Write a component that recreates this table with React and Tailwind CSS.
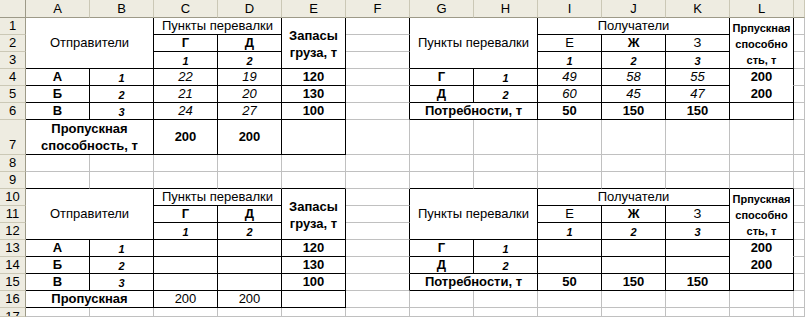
const R = { g: 'border-r-[#c0c0c0]', k: 'border-r-black', w: 'border-r-white' };
const B = { g: 'border-b-[#c0c0c0]', k: 'border-b-black', w: 'border-b-white' };

const reg = 'text-[13px]';
const bold = 'text-[13px] font-bold';
const it = 'text-[13px] italic';
const sm = 'text-[11px] font-bold italic pt-[2px]';

// one worksheet cell; s = span classes, r/b = right and bottom border colour
function X({ s = '', r = 'g', b = 'g', t = '', children }) {
  return (
    <div
      className={`${s} flex items-center justify-center overflow-hidden whitespace-nowrap border-r border-b bg-white ${R[r]} ${B[b]} ${t}`}
    >
      {children}
    </div>
  );
}

function Ch({ children }) {
  return (
    <div className="flex items-center justify-center border-r border-b border-r-[#cbc8b6] border-b-[#9d9a88] bg-[#eeece1] text-[13px]">
      {children}
    </div>
  );
}

function Rh({ children, pos = 'items-center' }) {
  return (
    <div
      className={`flex justify-center overflow-hidden border-r border-b border-r-[#9d9a88] border-b-[#cbc8b6] bg-[#eeece1] text-[13px] ${pos}`}
    >
      {children}
    </div>
  );
}

function TopRows({ n }) {
  return (
    <>
      <Rh>{n}</Rh>
      <X s="col-span-2 row-span-3" r="k" b="k" t={reg}>Отправители</X>
      <X s="col-span-2" r="k" b="k" t={reg}>Пункты перевалки</X>
      <X s="row-span-3" r="k" b="k" t={`${bold} leading-[17px] text-center pt-[1px]`}>
        Запасы
        <br />
        груза, т
      </X>
      <X r="k" />
      <X s="col-span-2 row-span-3" r="k" b="k" t={reg}>Пункты перевалки</X>
      <X s="col-span-3" r="k" b="k" t={reg}>Получатели</X>
      <X s="row-span-3" r="k" b="k" t="text-[11px] font-bold leading-[16px] text-center pt-[2px]">
        Прпускная
        <br />
        способно
        <br />
        сть, т
      </X>
      <X />

      <Rh>{n + 1}</Rh>
      <X r="k" b="k" t={bold}>Г</X>
      <X r="k" b="k" t={bold}>Д</X>
      <X r="k" />
      <X r="k" b="k" t={reg}>Е</X>
      <X r="k" b="k" t={bold}>Ж</X>
      <X r="k" b="k" t={reg}>З</X>
      <X />

      <Rh>{n + 2}</Rh>
      <X r="k" b="k" t={sm}>1</X>
      <X r="k" b="k" t={sm}>2</X>
      <X r="k" />
      <X r="k" b="k" t={sm}>1</X>
      <X r="k" b="k" t={sm}>2</X>
      <X r="k" b="k" t={sm}>3</X>
      <X />
    </>
  );
}

function DataRow({ n, name, idx, c, d, stock, dest, didx, vals, cap }) {
  return (
    <>
      <Rh>{n}</Rh>
      <X r="k" b="k" t={bold}>{name}</X>
      <X r="k" b="k" t={sm}>{idx}</X>
      <X r="k" b="k" t={it}>{c}</X>
      <X r="k" b="k" t={it}>{d}</X>
      <X r="k" b="k" t={bold}>{stock}</X>
      <X r="k" />
      <X r="k" b="k" t={bold}>{dest}</X>
      <X r="k" b="k" t={sm}>{didx}</X>
      <X r="k" b="k" t={it}>{vals[0]}</X>
      <X r="k" b="k" t={it}>{vals[1]}</X>
      <X r="k" b="k" t={it}>{vals[2]}</X>
      <X r="k" b={n === 4 || n === 13 ? 'w' : 'k'} t={bold}>{cap}</X>
      <X />
    </>
  );
}

function NeedRow({ n, name, idx, c, d, stock }) {
  return (
    <>
      <Rh>{n}</Rh>
      <X r="k" b="k" t={bold}>{name}</X>
      <X r="k" b="k" t={sm}>{idx}</X>
      <X r="k" b="k" t={it}>{c}</X>
      <X r="k" b="k" t={it}>{d}</X>
      <X r="k" b="k" t={bold}>{stock}</X>
      <X r="k" />
      <X s="col-span-2" r="k" b="k" t={bold}>Потребности, т</X>
      <X r="k" b="k" t={bold}>50</X>
      <X r="k" b="k" t={bold}>150</X>
      <X r="k" b="k" t={bold}>150</X>
      <X r="k" b="k" />
      <X />
    </>
  );
}

function EmptyRow({ n, edge }) {
  const b = edge ? 'k' : 'g';
  return (
    <>
      <Rh>{n}</Rh>
      <X b={b} />
      <X b={b} />
      <X b={b} />
      <X b={b} />
      <X b={b} />
      <X />
      <X b={b} />
      <X b={b} />
      <X b={b} />
      <X b={b} />
      <X b={b} />
      <X b={b} />
      <X />
    </>
  );
}

export default function App() {
  const cols = ['A', 'B', 'C', 'D', 'E', 'F', 'G', 'H', 'I', 'J', 'K', 'L'];

  return (
    <div className="w-[805px] h-[317px] overflow-hidden bg-white font-['Liberation_Sans',Arial,sans-serif] text-black">
      <div className="grid grid-cols-[26px_repeat(12,64px)_11px] grid-rows-[18px_repeat(6,17px)_35px_repeat(9,17px)_9px]">
        {/* column headers */}
        <div className="border-r border-b border-r-[#9d9a88] border-b-[#9d9a88] bg-[#eeece1]"></div>
        {cols.map((c) => (
          <Ch key={c}>{c}</Ch>
        ))}
        <Ch />

        {/* upper tables */}
        <TopRows n={1} />
        <DataRow n={4} name="А" idx="1" c="22" d="19" stock="120" dest="Г" didx="1" vals={['49', '58', '55']} cap="200" />
        <DataRow n={5} name="Б" idx="2" c="21" d="20" stock="130" dest="Д" didx="2" vals={['60', '45', '47']} cap="200" />
        <NeedRow n={6} name="В" idx="3" c="24" d="27" stock="100" />

        <Rh pos="items-end">7</Rh>
        <X s="col-span-2" r="k" b="k" t={`${bold} leading-[17px] text-center`}>
          Пропускная
          <br />
          способность, т
        </X>
        <X r="k" b="k" t={bold}>200</X>
        <X r="k" b="k" t={bold}>200</X>
        <X r="k" b="k" />
        <X />
        <X />
        <X />
        <X />
        <X />
        <X />
        <X />
        <X />

        <EmptyRow n={8} />
        <EmptyRow n={9} edge />

        {/* lower tables */}
        <TopRows n={10} />
        <DataRow n={13} name="А" idx="1" stock="120" dest="Г" didx="1" vals={['', '', '']} cap="200" />
        <DataRow n={14} name="Б" idx="2" stock="130" dest="Д" didx="2" vals={['', '', '']} cap="200" />
        <NeedRow n={15} name="В" idx="3" stock="100" />

        <Rh>16</Rh>
        <X s="col-span-2" r="k" b="k" t={bold}>Пропускная</X>
        <X r="k" b="k" t={reg}>200</X>
        <X r="k" b="k" t={reg}>200</X>
        <X r="k" b="k" />
        <X />
        <X />
        <X />
        <X />
        <X />
        <X />
        <X />
        <X />

        <Rh pos="items-start leading-[15px] pt-[1px]">17</Rh>
        {cols.map((c) => (
          <X key={c} />
        ))}
        <X />
      </div>
    </div>
  );
}
